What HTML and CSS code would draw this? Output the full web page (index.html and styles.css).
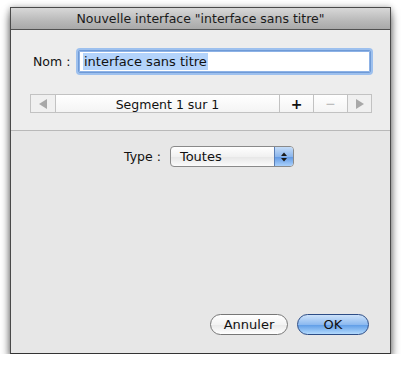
FILE: index.html
```html
<!DOCTYPE html>
<html lang="fr">
<head>
  <meta charset="UTF-8" />
  <title>Nouvelle interface</title>
  <link rel="stylesheet" href="styles.css">
</head>
<body>

  <div class="fenetre">
    <div class="titre">Nouvelle interface "interface sans titre"</div>

    <div class="haut">
      <div class="ligne-nom">
        <label for="nom">Nom :</label>
        <div class="champ"><span class="selection">interface sans titre</span></div>
      </div>

      <div class="segments">
        <div class="seg fleche gauche"><span class="tri-g"></span></div>
        <div class="seg milieu">Segment 1 sur 1</div>
        <div class="seg plus">+</div>
        <div class="seg moins">−</div>
        <div class="seg fleche droite"><span class="tri-d"></span></div>
      </div>
    </div>

    <div class="bas">
      <div class="ligne-type">
        <span class="etiquette">Type :</span>
        <div class="popup">
          <span class="popup-texte">Toutes</span>
          <span class="popup-fleches">
            <svg width="8" height="12" viewBox="0 0 8 12">
              <path d="M1 5 L4 1.5 L7 5 Z" fill="#1a1a1a"/>
              <path d="M1 7 L4 10.5 L7 7 Z" fill="#1a1a1a"/>
            </svg>
          </span>
        </div>
      </div>

      <div class="boutons">
        <button class="btn annuler">Annuler</button>
        <button class="btn ok">OK</button>
      </div>
    </div>
  </div>

</body>
</html>
```

FILE: styles.css
```css
* {
  box-sizing: border-box;
}

body {
  margin: 0;
  background: #ffffff;
  font-family: "DejaVu Sans", "Liberation Sans", sans-serif;
  font-size: 12.5px;
  color: #111;
}

.fenetre {
  margin: 7px 0 0 10px;
  width: 381px;
  height: 347px;
  border: 1px solid #4a4a4a;
  border-bottom-color: #333;
  background: #ededed;
  box-shadow: 0 7px 9px rgba(0, 0, 0, 0.55), 0 0 6px rgba(0, 0, 0, 0.3);
  display: flex;
  flex-direction: column;
}

.titre {
  height: 22px;
  line-height: 21px;
  text-align: center;
  color: #1a1a1a;
  background: linear-gradient(#d8d8d8, #b9b9b9 60%, #a9a9a9);
  border-bottom: 1px solid #515151;
}

.haut {
  height: 101px;
  padding: 20px 18px 0 19px;
  border-bottom: 1px solid #b9b9b9;
}

.ligne-nom {
  display: flex;
  align-items: center;
  padding-left: 3px;
}

.ligne-nom label {
  width: 45px;
}

.champ {
  flex: 1;
  height: 23px;
  margin-right: 1px;
  background: #fff;
  border: 1px solid #6f9ad6;
  border-radius: 2px;
  box-shadow: 0 0 0 2px #9dc0ee, inset 0 0 0 1px #8db2e6;
  padding: 2px 0 0 4px;
}

.selection {
  display: inline-block;
  background: #b3d3fb;
  line-height: 17px;
  padding: 0 1px;
  font-size: 13px;
}

.segments {
  display: flex;
  height: 19px;
  margin-top: 21px;
  border: 1px solid #c2c2c2;
  background: linear-gradient(#ffffff, #f4f4f4);
}

.seg {
  display: flex;
  align-items: center;
  justify-content: center;
  border-left: 1px solid #c2c2c2;
}

.seg:first-child {
  border-left: none;
}

.fleche {
  width: 24px;
  background: #f0f0f0;
}

.droite {
  flex: 1;
}

.milieu {
  width: 224px;
  padding-top: 1px;
}

.plus {
  width: 34px;
  font-weight: bold;
  font-size: 14px;
}

.moins {
  width: 34px;
  color: #b5b5b5;
}

.tri-g {
  width: 0;
  height: 0;
  border-top: 5px solid transparent;
  border-bottom: 5px solid transparent;
  border-right: 8px solid #a8a8a8;
}

.tri-d {
  width: 0;
  height: 0;
  border-top: 5px solid transparent;
  border-bottom: 5px solid transparent;
  border-left: 8px solid #a8a8a8;
}

.bas {
  flex: 1;
  background: #e7e7e7;
  display: flex;
  flex-direction: column;
  padding: 15px 21px 18px 0;
}

.ligne-type {
  display: flex;
  align-items: center;
  gap: 9px;
  padding-left: 113px;
}

.popup {
  display: flex;
  width: 124px;
  height: 21px;
  border: 1px solid #8a8a8a;
  border-radius: 4px;
  background: linear-gradient(#ffffff, #f1f1f1 50%, #e6e6e6 51%, #fbfbfb);
  overflow: hidden;
}

.popup-texte {
  flex: 1;
  padding: 2px 0 0 9px;
  font-size: 13px;
}

.popup-fleches {
  width: 19px;
  display: flex;
  align-items: center;
  justify-content: center;
  border-left: 1px solid #5b7fb5;
  background: linear-gradient(#c4dcf8, #8cb6ec 50%, #5f97e3 51%, #a9d0fb);
}

.boutons {
  margin-top: auto;
  display: flex;
  justify-content: flex-end;
  gap: 9px;
}

.btn {
  height: 21px;
  border-radius: 11px;
  font-family: "DejaVu Sans", "Liberation Sans", sans-serif;
  font-size: 13px;
  color: #111;
  padding: 0;
}

.annuler {
  width: 78px;
  border: 1px solid #777;
  background: linear-gradient(#ffffff, #f3f3f3 50%, #e8e8e8 51%, #ffffff);
}

.ok {
  width: 72px;
  border: 1px solid #2d4d86;
  background: linear-gradient(#cde2fa, #8dbaf0 50%, #5d9be6 51%, #b3dafd);
}
```
